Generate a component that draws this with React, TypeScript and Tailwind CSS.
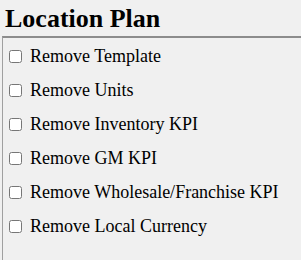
const options = [
  "Remove Template",
  "Remove Units",
  "Remove Inventory KPI",
  "Remove GM KPI",
  "Remove Wholesale/Franchise KPI",
  "Remove Local Currency",
];

export default function App() {
  return (
    <div className="w-[301px] h-[260px] overflow-hidden bg-[#f0f0f0] text-black font-['Liberation_Serif']">
      <h2 className="pl-[5px] pt-[6px] h-[36px] text-[26px] leading-[26px] font-bold">Location Plan</h2>
      <div className="ml-[2px] h-[224px] border-t-2 border-l border-t-[#8c8c8c] border-l-[#a0a0a0] pt-[1px]">
        {options.map((label) => (
          <label key={label} className="flex items-center h-[34px] pl-[6px] text-[18px]">
            <input type="checkbox" className="m-0 w-[13px] h-[13px] mr-[8px]" />
            <span>{label}</span>
          </label>
        ))}
      </div>
    </div>
  );
}
